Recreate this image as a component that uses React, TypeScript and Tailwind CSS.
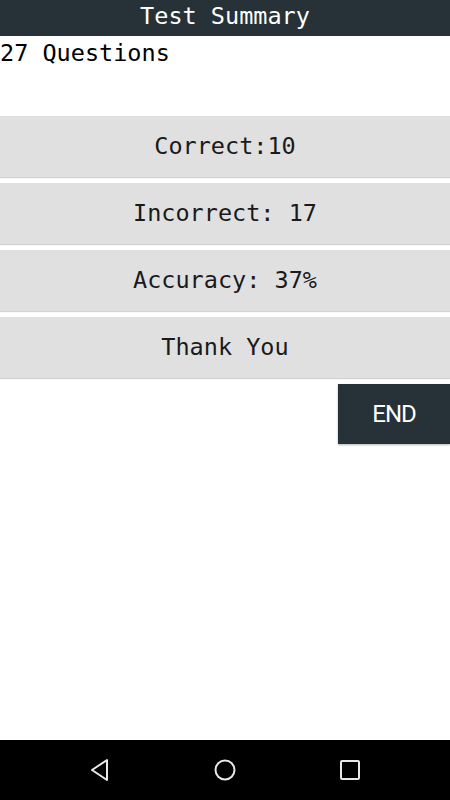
import React from 'react';

const mono = "font-['DejaVu_Sans_Mono','Liberation_Mono',monospace]";

const Row: React.FC<{ label: string }> = ({ label }) => (
  <div className="h-[61px] w-full bg-[#e0e0e0] shadow-[0_1px_1px_rgba(0,0,0,0.18)] flex items-center justify-center text-[#1a1a1a] text-[23.5px]">
    {label}
  </div>
);

const App: React.FC = () => {
  return (
    <div className={`w-[450px] h-[800px] flex flex-col bg-white ${mono}`}>
      {/* Title bar */}
      <header className="h-[36px] bg-[#263238] flex items-center justify-center text-white text-[23.5px] leading-none pb-[2px]">
        Test Summary
      </header>

      <main className="flex-1 flex flex-col">
        <p className="h-[80px] pt-[2px] text-[23.5px] leading-[30px] text-black">27 Questions</p>

        <div className="flex flex-col gap-[6px]">
          <Row label="Correct:10" />
          <Row label="Incorrect: 17" />
          <Row label="Accuracy: 37%" />
          <Row label="Thank You" />
        </div>

        <div className="flex justify-end mt-[6px]">
          <button className="w-[112px] h-[60px] bg-[#263238] text-white text-[24px] tracking-[-1px] font-['Roboto',sans-serif] font-normal shadow-[0_1px_2px_rgba(0,0,0,0.3)]">
            END
          </button>
        </div>
      </main>

      {/* Android nav bar */}
      <nav className="h-[60px] bg-black flex items-center pl-[88px] gap-[101px]">
        <svg width="24" height="24" viewBox="0 0 24 24" fill="none" stroke="#e8e8e8" strokeWidth="2" strokeLinejoin="round">
          <path d="M19 2 L19 22 L4 12 Z" />
        </svg>
        <svg width="24" height="24" viewBox="0 0 24 24" fill="none" stroke="#e8e8e8" strokeWidth="2">
          <circle cx="12" cy="12" r="9.5" />
        </svg>
        <svg width="24" height="24" viewBox="0 0 24 24" fill="none" stroke="#e8e8e8" strokeWidth="2">
          <rect x="3" y="3" width="18" height="18" rx="1" />
        </svg>
      </nav>
    </div>
  );
};

export default App;
